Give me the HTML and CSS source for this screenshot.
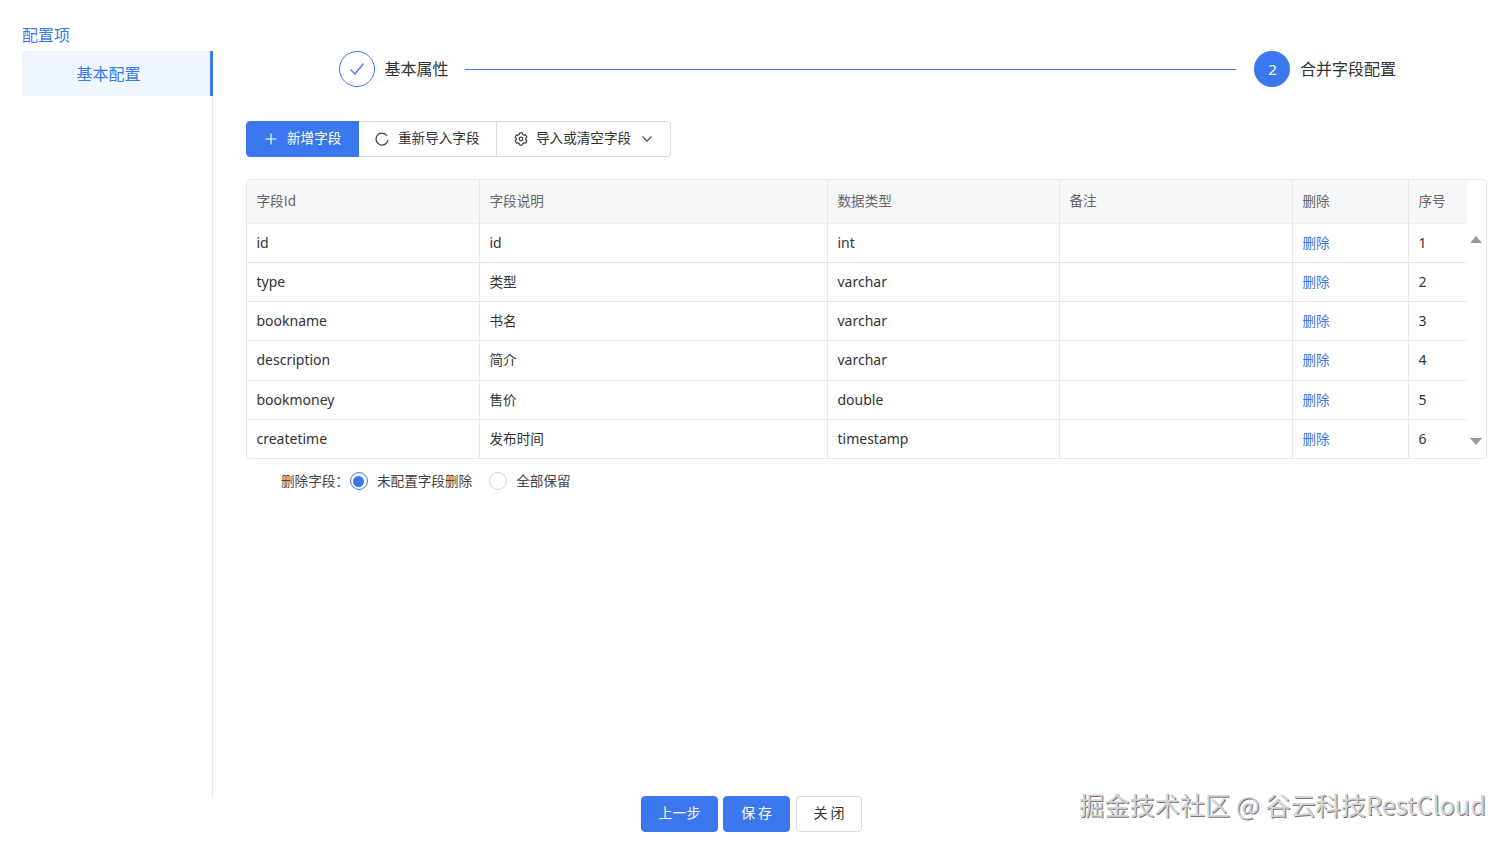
FILE: index.html
```html
<!DOCTYPE html>
<html lang="zh-CN">
<head>
<meta charset="utf-8">
<title>合并字段配置</title>
<link rel="stylesheet" href="styles.css">
</head>
<body>
<div class="page">
  <div class="main">
    <aside class="sidebar">
      <div class="side-title">配置项</div>
      <div class="side-body">
        <div class="side-item">基本配置</div>
      </div>
    </aside>
    <section class="content">
      <div class="steps">
        <div class="step">
          <span class="step-icon done">
            <svg width="16" height="14" viewBox="0 0 16 14"><path d="M1.500 7.500L6 12 14.500 1.500" fill="none" stroke="#3b78ed" stroke-width="1.200"/></svg>
          </span>
          <span class="step-label">基本属性</span>
        </div>
        <div class="step-line"></div>
        <div class="step">
          <span class="step-icon active">2</span>
          <span class="step-label">合并字段配置</span>
        </div>
      </div>
      <div class="toolbar">
        <button class="tbtn primary">
          <svg width="12" height="12" viewBox="0 0 12 12"><path d="M6 .5v11M.5 6h11" stroke="#fff" stroke-width="1.100" fill="none"/></svg>
          <span class="tlabel">新增字段</span>
        </button>
        <button class="tbtn second">
          <svg width="14" height="14" viewBox="0 0 14 14"><path d="M12 3.600A6 6 0 1 0 13 8" fill="none" stroke="#444" stroke-width="1.300"/></svg>
          <span class="tlabel">重新导入字段</span>
        </button>
        <button class="tbtn third">
          <svg width="14" height="14" viewBox="0 0 1024 1024"><path d="M924.800 625.700l-65.500-56c3.100-19 4.700-38.400 4.700-57.800s-1.600-38.800-4.700-57.800l65.500-56a32.030 32.030 0 0 0 9.300-35.200l-.9-2.600a443.740 443.740 0 0 0-79.700-137.900l-1.800-2.100a32.120 32.120 0 0 0-35.100-9.500l-81.300 28.900c-30-24.600-63.500-44-99.700-57.600l-15.700-85a32.050 32.050 0 0 0-25.800-25.700l-2.700-.5c-52.100-9.400-106.900-9.400-159 0l-2.700.5a32.050 32.050 0 0 0-25.800 25.700l-15.800 85.400a351.860 351.860 0 0 0-99 57.400l-81.900-29.100a32 32 0 0 0-35.100 9.500l-1.800 2.100a446.020 446.020 0 0 0-79.700 137.900l-.9 2.600c-4.500 12.500-.8 26.500 9.300 35.200l66.300 56.600c-3.100 18.800-4.600 38-4.600 57.100 0 19.200 1.500 38.400 4.600 57.100L99 625.500a32.030 32.030 0 0 0-9.300 35.200l.9 2.600c18.100 50.400 44.900 96.900 79.700 137.900l1.800 2.100a32.120 32.120 0 0 0 35.100 9.500l81.900-29.100c29.800 24.500 63.100 43.900 99 57.400l15.800 85.400a32.050 32.050 0 0 0 25.800 25.700l2.700.5a449.400 449.400 0 0 0 159 0l2.700-.5a32.050 32.050 0 0 0 25.800-25.700l15.700-85a350 350 0 0 0 99.700-57.600l81.300 28.900a32 32 0 0 0 35.100-9.500l1.800-2.100c34.800-41.100 61.600-87.500 79.700-137.900l.9-2.600c4.500-12.300.8-26.300-9.300-35z" fill="none" stroke="#444" stroke-width="90"/><circle cx="512" cy="511" r="130" fill="none" stroke="#444" stroke-width="90"/></svg>
          <span class="tlabel">导入或清空字段</span>
          <svg class="chev" width="10" height="6" viewBox="0 0 10 6"><path d="M.5.5L5 5.200 9.500.5" fill="none" stroke="#444" stroke-width="1.100"/></svg>
        </button>
      </div>
      <div class="table-box">
        <table class="fields">
          <colgroup>
            <col class="c1"><col class="c2"><col class="c3"><col class="c4"><col class="c5"><col class="c6">
          </colgroup>
          <thead>
            <tr><th>字段Id</th><th>字段说明</th><th>数据类型</th><th>备注</th><th>删除</th><th>序号</th></tr>
          </thead>
          <tbody>
            <tr><td>id</td><td>id</td><td>int</td><td></td><td class="cn"><a class="del">删除</a></td><td>1</td></tr>
            <tr><td>type</td><td class="cn">类型</td><td>varchar</td><td></td><td class="cn"><a class="del">删除</a></td><td>2</td></tr>
            <tr><td>bookname</td><td class="cn">书名</td><td>varchar</td><td></td><td class="cn"><a class="del">删除</a></td><td>3</td></tr>
            <tr class="tall"><td>description</td><td class="cn">简介</td><td>varchar</td><td></td><td class="cn"><a class="del">删除</a></td><td>4</td></tr>
            <tr class="raised"><td>bookmoney</td><td class="cn">售价</td><td>double</td><td></td><td class="cn"><a class="del">删除</a></td><td>5</td></tr>
            <tr class="raised short"><td>createtime</td><td class="cn">发布时间</td><td>timestamp</td><td></td><td class="cn"><a class="del">删除</a></td><td>6</td></tr>
          </tbody>
        </table>
        <div class="scrollbar">
          <span class="arrow up"></span>
          <span class="arrow down"></span>
        </div>
      </div>
      <div class="radio-row">
        <span class="radio-title">删除字段：</span>
        <label class="radio checked"><span class="dot"></span><span class="radio-text">未配置字段删除</span></label>
        <label class="radio"><span class="dot"></span><span class="radio-text">全部保留</span></label>
      </div>
    </section>
  </div>
  <footer class="footer">
    <button class="fbtn blue prev">上一步</button>
    <button class="fbtn blue save">保 存</button>
    <button class="fbtn plain">关 闭</button>
  </footer>
  <div class="watermark">掘金技术社区 @ 谷云科技RestCloud</div>
</div>
</body>
</html>
```
FILE: styles.css
```css
* { box-sizing: border-box; }
html, body { margin: 0; padding: 0; height: 100%; background: #fff; overflow: hidden; }
body { font-family: "Noto Sans CJK SC", "Noto Sans", sans-serif; font-size: 14px; color: #333; }
.page { position: relative; width: 1510px; height: 844px; display: flex; flex-direction: column; }
.main { display: flex; height: 797px; }

.sidebar { margin-left: 22px; width: 191px; display: flex; flex-direction: column; flex: none; }
.side-title { height: 51px; padding-top: 24px; color: #3b78ed; font-size: 16px; line-height: 20px; }
.side-body { flex: 1; border-right: 1px solid #e8e8e8; }
.side-item { height: 45px; background: #eff6ff; color: #3b78ed; border-right: 3px solid #3b78ed; margin-right: -1px; padding-right: 15px; text-align: center; line-height: 45px; font-size: 16px; }

.content { flex: 1; min-width: 0; padding: 51px 23px 0 33px; }
.steps { display: flex; align-items: center; height: 36px; padding-left: 93px; padding-right: 91px; }
.step { display: flex; align-items: center; gap: 10px; }
.step-icon { width: 36px; height: 36px; border-radius: 50%; display: flex; align-items: center; justify-content: center; }
.step-icon.done { border: 1px solid #3b78ed; }
.step-icon.active { background: #3b78ed; color: #fff; font-size: 15px; font-family: "Noto Sans", sans-serif; }
.step-label { font-size: 16px; color: #333; padding-bottom: 2px; margin-left: -0.500px; }
.step-line { flex: 1; height: 1px; background: #3b78ed; margin: 0 18px 0 16px; }

.toolbar { display: flex; margin-top: 34px; height: 36px; }
.tbtn { display: flex; align-items: center; height: 36px; font: inherit; font-size: 13.600px; color: #333; background: #fff; border: 1px solid #dcdcdc; padding: 0; cursor: pointer; }
.tlabel { padding-bottom: 4px; }
.tbtn.primary { width: 113px; background: #3b78ed; border-color: #3b78ed; color: #fff; border-radius: 4px 0 0 4px; padding-left: 18px; gap: 10px; }
.tbtn.second { width: 138px; border-left: 0; padding-left: 16px; gap: 9px; }
.tbtn.third { width: 174px; border-left: 0; border-radius: 0 4px 4px 0; padding-left: 17px; gap: 8px; }
.chev { margin-left: 3px; }

.table-box { display: flex; margin-top: 22px; height: 280px; width: 1241px; border: 1px solid #e8e8e8; border-radius: 4px; overflow: hidden; }
.fields { table-layout: fixed; width: 1220px; height: 278px; border-collapse: collapse; flex: none; }
.c1 { width: 232px; } .c2 { width: 348px; } .c3 { width: 232px; } .c4 { width: 233px; } .c5 { width: 116px; } .c6 { width: 59px; }
.fields th { height: 43px; background: #f5f7f9; color: #666; font-size: 13.600px; font-weight: 400; text-align: left; padding: 0 9px 2px 10px; border-right: 1px solid #e8e8e8; border-bottom: 1px solid #eeeeee; }
.fields th:last-child, .fields td:last-child { border-right: 0; }
.fields td { height: 39px; padding: 0 9px 0 10px; border-right: 1px solid #e8e8e8; border-bottom: 1px solid #e8e8e8; color: #333; font-size: 14px; font-family: "Noto Sans", "Noto Sans CJK SC", sans-serif; }
.fields th:first-child, .fields td:first-child { padding-left: 9.500px; }
.fields .tall td { height: 40px; padding-bottom: 2px; }
.fields .raised td { padding-bottom: 2px; }
.fields .short td { height: 38px; border-bottom: 0; }
.fields td.cn { font-size: 13.600px; font-family: "Noto Sans CJK SC", sans-serif; padding-bottom: 2px; }
.fields .tall td.cn { padding-bottom: 4px; }
.del { color: #3b78ed; }

.scrollbar { flex: 1; display: flex; flex-direction: column; justify-content: space-between; align-items: center; padding: 56px 1px 13px 0; }
.arrow { width: 0; height: 0; border-left: 6.500px solid transparent; border-right: 6.500px solid transparent; }
.arrow.up { border-bottom: 7px solid #999; }
.arrow.down { border-top: 7px solid #999; }

.radio-row { display: flex; align-items: center; height: 22px; margin-top: 11px; padding-left: 35px; font-size: 13.600px; color: #444; }
.radio-title { margin-right: 1px; padding-bottom: 2px; }
.radio-text { padding-bottom: 2px; }
.radio { display: flex; align-items: center; gap: 9px; }
.radio.checked { margin-right: 17px; }
.dot { width: 18px; height: 18px; border: 1px solid #d9d9d9; border-radius: 50%; display: block; position: relative; }
.radio.checked .dot { border-color: #3b78ed; }
.radio.checked .dot::after { content: ""; position: absolute; inset: 2.500px; border-radius: 50%; background: #3b78ed; }

.footer { display: flex; justify-content: flex-start; gap: 5px; padding-left: 641px; margin-top: -1px; }
.fbtn { height: 36px; font: inherit; font-size: 14px; border-radius: 4px; border: 1px solid #3b78ed; cursor: pointer; padding: 0 0 4px; }
.fbtn.blue { background: #3b78ed; color: #fff; }
.fbtn.prev { width: 77px; }
.fbtn.save { width: 67px; }
.fbtn.plain { width: 66px; margin-left: 1px; background: #fff; border-color: #dcdcdc; color: #333; }

.watermark { position: absolute; left: 1079px; top: 787px; font-size: 25.200px; line-height: 34px; white-space: nowrap; color: #d4d4d4; text-shadow: 1px 1px 0 #777; }
```
